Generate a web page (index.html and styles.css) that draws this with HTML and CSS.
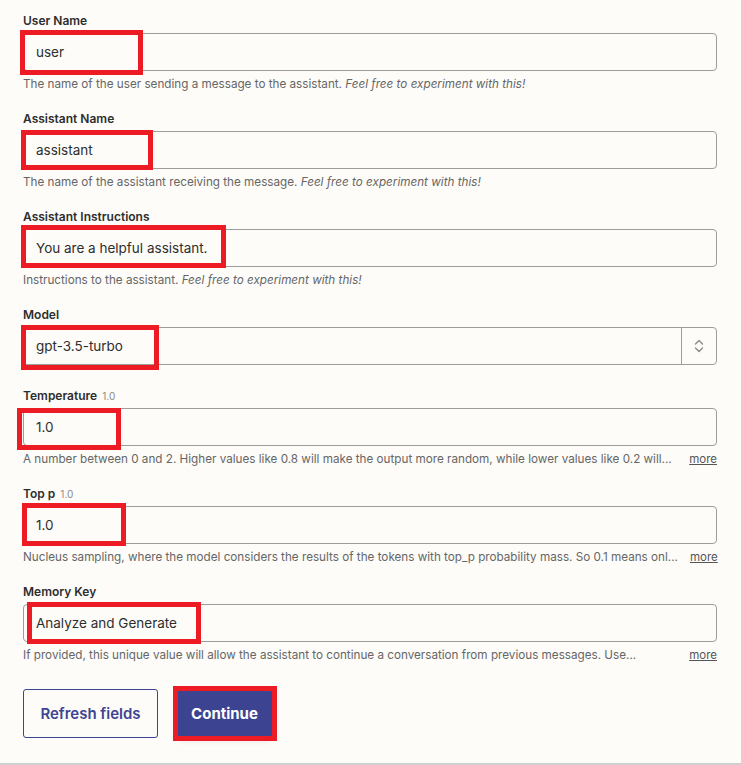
FILE: index.html
```html
<!DOCTYPE html>
<html lang="en">
<head>
  <meta charset="UTF-8" />
  <meta name="viewport" content="width=device-width, initial-scale=1.0" />
  <title>Assistant Settings</title>
  <link rel="stylesheet" href="styles.css">
</head>
<body>
  <form id="settingsForm">
    <div class="field">
      <label class="field-label">User Name</label>
      <div class="field-input">
        <input type="text" value="user" />
        <span class="mark mark-user"></span>
      </div>
      <p class="help">The name of the user sending a message to the assistant. <em>Feel free to experiment with this!</em></p>
    </div>

    <div class="field">
      <label class="field-label">Assistant Name</label>
      <div class="field-input">
        <input type="text" value="assistant" />
        <span class="mark mark-assistant"></span>
      </div>
      <p class="help">The name of the assistant receiving the message. <em>Feel free to experiment with this!</em></p>
    </div>

    <div class="field">
      <label class="field-label">Assistant Instructions</label>
      <div class="field-input">
        <input type="text" value="You are a helpful assistant." />
        <span class="mark mark-instructions"></span>
      </div>
      <p class="help">Instructions to the assistant. <em>Feel free to experiment with this!</em></p>
    </div>

    <div class="field field-select">
      <label class="field-label">Model</label>
      <div class="field-input select-box">
        <span class="select-value">gpt-3.5-turbo</span>
        <span class="select-arrows">
          <svg width="10" height="16" viewBox="0 0 10 16" fill="none" stroke="#8a8a8a" stroke-width="1.4" stroke-linecap="round" stroke-linejoin="round">
            <path d="M1.5 6 L5 2.5 L8.5 6" />
            <path d="M1.5 10 L5 13.5 L8.5 10" />
          </svg>
        </span>
        <span class="mark mark-model"></span>
      </div>
    </div>

    <div class="field">
      <label class="field-label">Temperature <small>1.0</small></label>
      <div class="field-input">
        <input type="text" value="1.0" />
        <span class="mark mark-temp"></span>
      </div>
      <div class="help help-row">
        <span class="help-text">A number between 0 and 2. Higher values like 0.8 will make the output more random, while lower values like 0.2 will...</span>
        <a href="#" class="more">more</a>
      </div>
    </div>

    <div class="field">
      <label class="field-label">Top p <small>1.0</small></label>
      <div class="field-input">
        <input type="text" value="1.0" />
        <span class="mark mark-topp"></span>
      </div>
      <div class="help help-row">
        <span class="help-text">Nucleus sampling, where the model considers the results of the tokens with top_p probability mass. So 0.1 means onl...</span>
        <a href="#" class="more">more</a>
      </div>
    </div>

    <div class="field">
      <label class="field-label">Memory Key</label>
      <div class="field-input">
        <input type="text" value="Analyze and Generate" />
        <span class="mark mark-memory"></span>
      </div>
      <div class="help help-row">
        <span class="help-text">If provided, this unique value will allow the assistant to continue a conversation from previous messages. Use...</span>
        <a href="#" class="more">more</a>
      </div>
    </div>

    <div class="actions">
      <button type="button" class="btn btn-outline">Refresh fields</button>
      <div class="btn-wrap">
        <button type="button" class="btn btn-primary">Continue</button>
        <span class="mark mark-continue"></span>
      </div>
    </div>
  </form>
</body>
</html>
```

FILE: styles.css
```css
* {
  box-sizing: border-box;
  margin: 0;
  padding: 0;
}
body {
  font-family: 'Inter', 'Noto Sans', sans-serif;
  background: #fdfcf9;
  color: #2d2e2e;
  overflow: hidden;
}
#settingsForm {
  padding: 13px 24px 0 23px;
  height: 765px;
  border-bottom: 2px solid #cfcfcf;
}
.field {
  margin-bottom: 19px;
}
.field-select {
  margin-bottom: 23px;
}
.field-label {
  display: block;
  font-size: 12px;
  font-weight: 600;
  line-height: 16px;
  margin-bottom: 4px;
  color: #2d2e2e;
}
.field-label small {
  font-size: 10px;
  font-weight: 400;
  color: #8b8b8b;
  margin-left: 2px;
}
.field-input {
  position: relative;
  height: 38px;
}
.field-input input {
  width: 100%;
  height: 38px;
  border: 1px solid #9d9d9d;
  border-radius: 4px;
  background: #fdfcf9;
  padding: 0 12px;
  font-family: inherit;
  font-size: 13.5px;
  color: #2d2e2e;
  outline: none;
}
.select-box {
  display: flex;
  align-items: center;
  border: 1px solid #9d9d9d;
  border-radius: 4px;
}
.select-value {
  flex: 1;
  padding-left: 12px;
  font-size: 13.5px;
}
.select-arrows {
  width: 35px;
  height: 100%;
  border-left: 1px solid #9d9d9d;
  display: flex;
  align-items: center;
  justify-content: center;
}
.help {
  margin-top: 5px;
  font-size: 11.7px;
  line-height: 16px;
  color: #666;
}
.help em {
  font-style: italic;
}
.help-row {
  display: flex;
  align-items: flex-end;
  justify-content: space-between;
  gap: 12px;
}
.help-text {
  white-space: nowrap;
}
.more {
  color: #555;
  font-size: 11.5px;
  text-decoration: underline;
  flex-shrink: 0;
}
.actions {
  display: flex;
  gap: 19px;
  margin-top: 26px;
}
.btn {
  height: 49px;
  border-radius: 3px;
  font-family: inherit;
  font-weight: 600;
  cursor: pointer;
}
.btn-outline {
  width: 135px;
  background: #fdfcf9;
  border: 1px solid #3d4592;
  color: #3d4592;
  font-size: 15px;
}
.btn-wrap {
  position: relative;
}
.btn-primary {
  width: 95px;
  background: #3c4391;
  border: none;
  color: #fff;
  font-weight: 700;
  font-size: 15px;
  box-shadow: 0 2px 6px rgba(0, 0, 0, 0.12);
}
.mark {
  position: absolute;
  border: 5px solid #ed1c24;
  pointer-events: none;
}
.mark-user { left: -3px; top: -3px; width: 123px; height: 45px; }
.mark-assistant { left: -2px; top: -1px; width: 132px; height: 40px; }
.mark-instructions { left: -2px; top: -4px; width: 205px; height: 43px; }
.mark-model { left: -3px; top: -3px; width: 138px; height: 45px; }
.mark-temp { left: -6px; top: 0; width: 104px; height: 42px; }
.mark-topp { left: -1px; top: -3px; width: 104px; height: 43px; }
.mark-memory { left: 4px; top: -2px; width: 174px; height: 42px; }
.mark-continue { left: -4px; top: -3px; width: 104px; height: 55px; }
```
